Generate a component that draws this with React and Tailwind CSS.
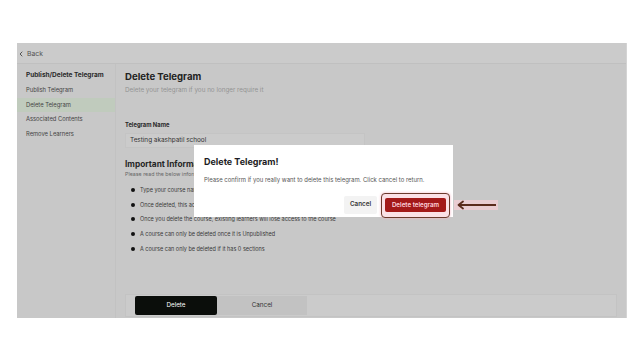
import React from 'react';
import { ChevronLeft } from 'lucide-react';

const sideItems = ['Publish Telegram', 'Delete Telegram', 'Associated Contents', 'Remove Learners'];

const rules = [
  'Type your course name to confirm the deletion',
  'Once deleted, this action cannot be undone',
  'Once you delete the course, existing learners will lose access to the course',
  'A course can only be deleted once it is Unpublished',
  'A course can only be deleted if it has 0 sections',
];

const App = () => {
  return (
    <div className="w-[644px] h-[362px] bg-white pt-[43px] pl-[17px] font-['Inter',sans-serif] text-[#222]">
      <div className="relative w-[610px] h-[275px] bg-[#c8c8c8] flex flex-col border-r border-[#d4d4d4]">
        {/* Header */}
        <div className="h-[21px] shrink-0 bg-[#cbcbcb] border-b border-[#c0c0c0] flex items-center pt-[2px] gap-[2px] text-[#555]">
          <ChevronLeft className="w-[8px] h-[8px]" strokeWidth={3} />
          <span className="text-[6.8px]">Back</span>
        </div>

        <div className="flex flex-1 min-h-0">
          {/* Sidebar */}
          <div className="w-[99px] shrink-0 border-r border-[#c2c2c2] pt-[6px]">
            <div className="pl-[9px] text-[6.5px] font-bold text-[#2a2a2a] leading-[10px]">Publish/Delete Telegram</div>
            <div className="mt-[3px]">
              {sideItems.map((item) => (
                <div
                  key={item}
                  className={`h-[14.7px] pl-[9px] flex items-center text-[5.8px] text-[#444] ${item === 'Delete Telegram' ? 'bg-[#c0cbbd]' : ''}`}
                >
                  {item}
                </div>
              ))}
            </div>
          </div>

          {/* Main */}
          <div className="flex-1 flex flex-col px-[9px] pt-[6px] pb-[1px]">
            <div className="text-[9.6px] font-bold leading-[14px] text-[#222]">Delete Telegram</div>
            <div className="text-[6.3px] text-[#939393] leading-[9px] mt-[2px]">Delete your telegram if you no longer require it</div>

            <div className="mt-[25px] text-[5.8px] font-bold leading-[9px] text-[#2a2a2a]">Telegram Name</div>
            <div className="mt-[4px] w-[240px] h-[15px] bg-[#cbcbcb] border border-[#c4c4c4] flex items-center pl-[4px] text-[6.4px] text-[#333]">
              Testing akashpatil school
            </div>

            <div className="mt-[10px] text-[8.3px] font-bold leading-[12px] text-[#262626]">Important Information</div>
            <div className="text-[5.3px] text-[#666] leading-[8px]">Please read the below information carefully</div>

            <ul className="mt-[5px] pl-[6px]">
              {rules.map((r) => (
                <li key={r} className="h-[14.6px] flex items-center gap-[5px] text-[5.5px] text-[#3a3a3a]">
                  <span className="w-[4px] h-[4px] rounded-full bg-[#111] shrink-0" />
                  {r}
                </li>
              ))}
            </ul>

            {/* Bottom action bar */}
            <div className="mt-auto h-[23px] bg-[#cbcbcb] border border-[#c3c3c3] flex items-center pl-[9px]">
              <button className="w-[82px] h-[19px] bg-[#0b0e0b] rounded-[2px] text-white text-[6.3px]">Delete</button>
              <button className="w-[90px] h-[19px] bg-[#c2c2c2] text-[#333] text-[6.3px]">Cancel</button>
            </div>
          </div>
        </div>

        {/* Confirm modal */}
        <div className="absolute left-[177px] top-[102px] w-[259px] h-[72px] bg-white px-[10px] pt-[11px] flex flex-col">
          <div className="text-[9px] font-bold leading-[12px] text-[#1c1c24]">Delete Telegram!</div>
          <div className="mt-[7px] text-[5.95px] text-[#555] leading-[9px] whitespace-nowrap">
            Please confirm if you really want to delete this telegram. Click cancel to return.
          </div>
          <div className="mt-auto mb-[3px] mr-[-3px] flex items-center justify-end gap-[8px]">
            <button className="w-[33px] h-[18px] bg-[#f3f3f3] rounded-[2px] text-[6.3px] font-semibold text-[#333]">Cancel</button>
            <div className="relative flex">
              <div className="absolute -left-[4px] -right-[4px] -top-[5px] -bottom-[6px] rounded-[4px] border-[1.5px] border-[#6b3a2c] bg-[#fbe0e6] shadow-[0_0_3px_#f5b5c5]" />
              <button className="relative w-[61px] h-[14px] bg-[#a31919] rounded-[2px] text-[6.2px] font-semibold text-[#ffd6de]">
                Delete telegram
              </button>
              {/* annotation arrow */}
              <div className="absolute left-[69px] top-[2px] w-[44px] h-[10px] bg-[#f6cdd6]/70" />
              <svg className="absolute left-[72px] top-[2px]" width="40" height="10" viewBox="0 0 40 10">
                <line x1="2" y1="5" x2="39" y2="5" stroke="#5a2a1c" strokeWidth="1.8" />
                <path d="M6 1.5 L1.5 5 L6 8.5" fill="none" stroke="#5a2a1c" strokeWidth="1.8" strokeLinecap="round" strokeLinejoin="round" />
              </svg>
            </div>
          </div>
        </div>
      </div>
    </div>
  );
};

export default App;
